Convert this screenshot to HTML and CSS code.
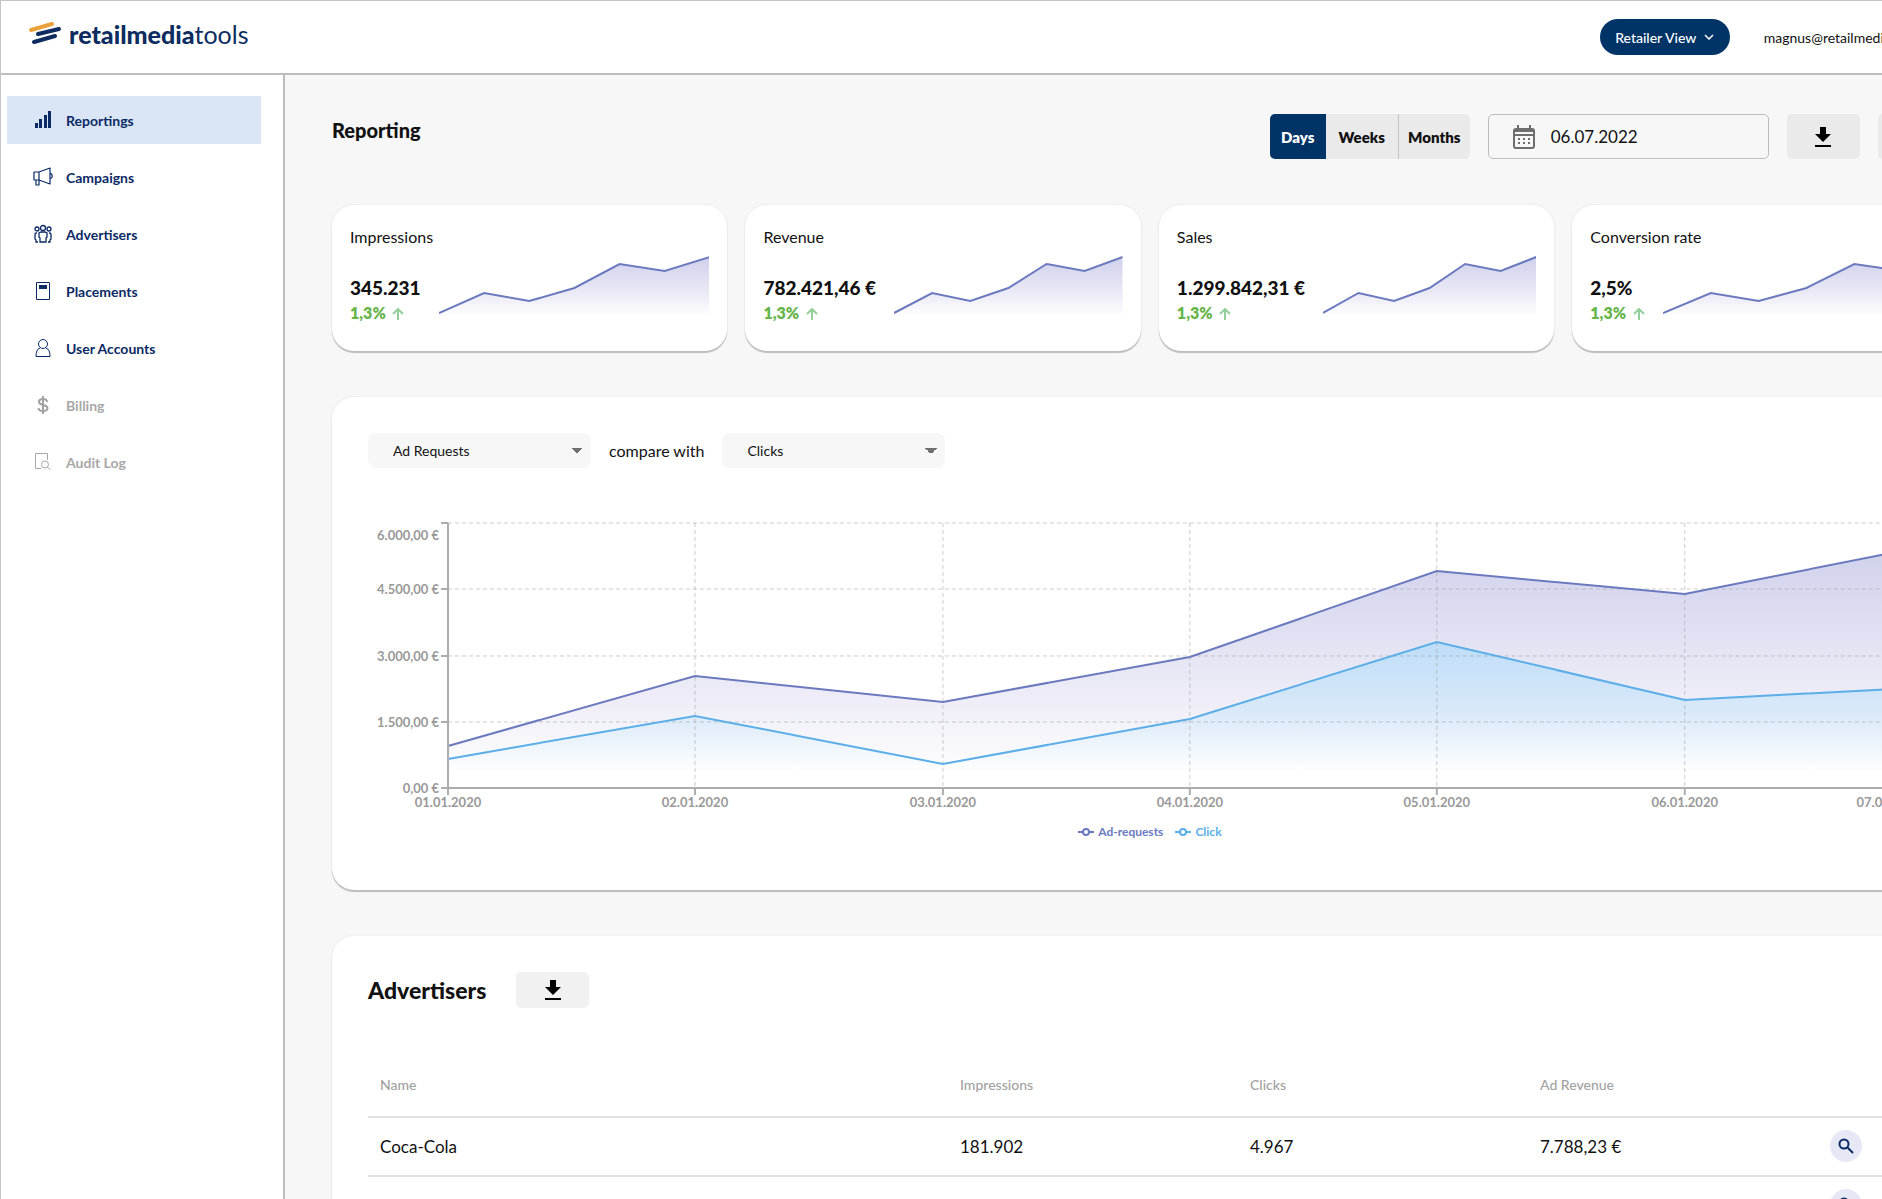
FILE: index.html
```html
<!DOCTYPE html>
<html lang="en">

<head>
    <meta charset="UTF-8">
    <meta name="viewport" content="width=device-width, initial-scale=1.0">
    <title>Reporting - retailmediatools</title>
    <link rel="stylesheet" href="styles.css">
</head>

<body>
    <!-- shared icons and sparkline -->
    <svg class="defs" width="0" height="0" aria-hidden="true">
        <defs>
            <linearGradient id="purple" x1="0" y1="0" x2="0" y2="1">
                <stop offset="0" stop-color="#cfd1ec"></stop>
                <stop offset="0.6" stop-color="#ecebf7"></stop>
                <stop offset="0.95" stop-color="#ffffff"></stop>
            </linearGradient>
            <linearGradient id="blue" x1="0" y1="0" x2="0" y2="1">
                <stop offset="0" stop-color="#b9dcf8"></stop>
                <stop offset="0.5" stop-color="#d9e9f9"></stop>
                <stop offset="0.9" stop-color="#ffffff"></stop>
            </linearGradient>
            <symbol id="spark" viewBox="0 0 270 70" preserveAspectRatio="none">
                <path d="M0 59 45 39 90 47 135 34 180 10 225 17 270 3V66H0z" fill="url(#purple)"></path>
                <path d="M0 59 45 39 90 47 135 34 180 10 225 17 270 3" fill="none" stroke="#6b79bf" stroke-width="2" vector-effect="non-scaling-stroke"></path>
            </symbol>
            <symbol id="download" viewBox="0 0 16 20">
                <path d="M5 0h6v7h5l-8 8-8-8h5zM0 18h16v2H0z"></path>
            </symbol>
            <symbol id="search" viewBox="0 0 16 16">
                <circle cx="6" cy="6" r="4.500" fill="none" stroke="#0b2a66" stroke-width="2"></circle>
                <path d="M9.500 9.500 15 15" stroke="#0b2a66" stroke-width="2"></path>
            </symbol>
            <symbol id="up" viewBox="0 0 12 12">
                <path d="M6 12V1M1 6l5-5 5 5" fill="none" stroke="#94cf9a" stroke-width="2"></path>
            </symbol>
        </defs>
    </svg>

    <div class="app">
        <header class="header">
            <a href="#" class="logo">
                <svg width="34" height="24" viewBox="0 0 34 24" fill="none" stroke-linecap="round" stroke-width="4">
                    <path d="M3 9 24 3" stroke="#e9a23b"></path>
                    <path d="M10 13 31 8" stroke="#0d2c5f"></path>
                    <path d="M6 21 27 15" stroke="#0d2c5f"></path>
                </svg>
                <span><b>retailmedia</b>tools</span>
            </a>
            <button class="view-btn">Retailer View
                <svg width="10" height="6" viewBox="0 0 10 6" fill="none" stroke="#fff" stroke-width="1.500"><path d="M1 1l4 4 4-4"></path></svg>
            </button>
            <span class="email">magnus@retailmediatools.com</span>
        </header>

        <div class="body">
            <nav class="sidebar">
                <a href="#" class="nav-item active">
                    <svg width="20" height="20" viewBox="0 0 20 20" fill="#0b2a66"><path d="M2 13h3v5H2zM6 9h3v9H6zM11 5h3v13h-3zM15 1h3v17h-3z"></path></svg>
                    Reportings
                </a>
                <a href="#" class="nav-item">
                    <svg width="20" height="20" viewBox="0 0 20 20" fill="none" stroke="#0b2a66" stroke-width="1.200" stroke-linejoin="round"><path d="M1 5h5v8H1zM6 5l11-4v16L6 13M3 13v5h3v-5M17 6c3 1 3 5 0 6"></path></svg>
                    Campaigns
                </a>
                <a href="#" class="nav-item">
                    <svg width="20" height="20" viewBox="0 0 20 20" fill="none" stroke="#0b2a66" stroke-width="1.300"><circle cx="10" cy="4" r="2.500"></circle><circle cx="4" cy="5" r="2"></circle><circle cx="16" cy="5" r="2"></circle><path d="M7 18v-4l-1-1V9l2-1h4l2 1v4l-1 1v4zM4 9H3l-1 1v5l1 1v2h2M16 9h1l1 1v5l-1 1v2h-2"></path></svg>
                    Advertisers
                </a>
                <a href="#" class="nav-item">
                    <svg width="20" height="20" viewBox="0 0 20 20"><path d="M3.500 1.500h13v17h-13z" fill="none" stroke="#0b2a66"></path><path d="M6 4h8v4H6z" fill="#0b2a66"></path></svg>
                    Placements
                </a>
                <a href="#" class="nav-item">
                    <svg width="20" height="20" viewBox="0 0 20 20" fill="none" stroke="#0b2a66"><circle cx="10" cy="6" r="4.500"></circle><path d="M7 10c-3 1-4 4-4 8.500h14c0-4.500-1-7.500-4-8.500"></path></svg>
                    User Accounts
                </a>
                <a href="#" class="nav-item disabled">
                    <svg width="20" height="20" viewBox="0 0 20 20" fill="none" stroke="#a2a2a2" stroke-width="2"><path d="M14 7c0-2-1.500-3-4-3S6 5 6 7c0 4 8.500 2 8.500 6 0 2-2 3-4.500 3s-4.500-1-4.500-3M10 1v18"></path></svg>
                    Billing
                </a>
                <a href="#" class="nav-item disabled">
                    <svg width="20" height="20" viewBox="0 0 20 20" fill="none" stroke="#a8a8a8"><path d="M8 16.500H2.500v-15h12V8"></path><circle cx="12" cy="12.500" r="3.500"></circle><path d="M14.500 15l3 3"></path></svg>
                    Audit Log
                </a>
            </nav>

            <main class="main">
                <div class="toolbar">
                    <h1>Reporting</h1>
                    <div class="toggle">
                        <button class="on">Days</button>
                        <button>Weeks</button>
                        <button>Months</button>
                    </div>
                    <label class="date">
                        <svg width="22" height="24" viewBox="0 0 22 24" fill="none" stroke="#6e6e6e" stroke-width="2"><rect x="1" y="4" width="20" height="19" rx="2"></rect><path d="M1 6h20M1 10h20M5 0v4M17 0v4"></path><path d="M5 14h12M5 18h12" stroke-dasharray="2 3"></path></svg>
                        <input type="text" value="06.07.2022" aria-label="Date">
                    </label>
                    <button class="download" aria-label="Download"><svg width="16" height="20"><use href="#download"></use></svg></button>
                    <button class="download last" aria-label="More"></button>
                </div>

                <section class="stats">
                    <div class="card stat">
                        <h3>Impressions</h3>
                        <div class="stat-row">
                            <div>
                                <p class="value">345.231</p>
                                <p class="change">1,3% <svg width="12" height="12"><use href="#up"></use></svg></p>
                            </div>
                            <svg class="spark"><use href="#spark"></use></svg>
                        </div>
                    </div>
                    <div class="card stat">
                        <h3>Revenue</h3>
                        <div class="stat-row">
                            <div>
                                <p class="value">782.421,46 €</p>
                                <p class="change">1,3% <svg width="12" height="12"><use href="#up"></use></svg></p>
                            </div>
                            <svg class="spark"><use href="#spark"></use></svg>
                        </div>
                    </div>
                    <div class="card stat">
                        <h3>Sales</h3>
                        <div class="stat-row">
                            <div>
                                <p class="value">1.299.842,31 €</p>
                                <p class="change">1,3% <svg width="12" height="12"><use href="#up"></use></svg></p>
                            </div>
                            <svg class="spark"><use href="#spark"></use></svg>
                        </div>
                    </div>
                    <div class="card stat">
                        <h3>Conversion rate</h3>
                        <div class="stat-row">
                            <div>
                                <p class="value">2,5%</p>
                                <p class="change">1,3% <svg width="12" height="12"><use href="#up"></use></svg></p>
                            </div>
                            <svg class="spark"><use href="#spark"></use></svg>
                        </div>
                    </div>
                </section>

                <section class="card panel">
                    <div class="compare">
                        <select aria-label="First metric">
                            <option>Ad Requests</option>
                        </select>
                        <span>compare with</span>
                        <select aria-label="Second metric">
                            <option>Clicks</option>
                        </select>
                    </div>
                    <svg class="chart" viewBox="0 0 1564 300">
                        <path d="M80 231 327 161 575 187 822 142 1069 56 1317 79 1564 30V273H80z" fill="url(#purple)"></path>
                        <path d="M80 244 327 201 575 249 822 204 1069 127 1317 185 1564 172V273H80z" fill="url(#blue)" fill-opacity="0.900"></path>
                        <g class="grid">
                            <path d="M80 8H1564M80 74H1564M80 141H1564M80 207H1564"></path>
                            <path d="M327 8V273M575 8V273M822 8V273M1069 8V273M1317 8V273M1564 8V273"></path>
                        </g>
                        <path d="M80 231 327 161 575 187 822 142 1069 56 1317 79 1564 30" fill="none" stroke="#6b79bf" stroke-width="2"></path>
                        <path d="M80 244 327 201 575 249 822 204 1069 127 1317 185 1564 172" fill="none" stroke="#5baee8" stroke-width="2"></path>
                        <g class="axis">
                            <path d="M80 8V273M80 273H1564"></path>
                            <path d="M73 8h7M73 74h7M73 141h7M73 207h7M73 273h7M80 273v7M327 273v7M575 273v7M822 273v7M1069 273v7M1317 273v7M1564 273v7"></path>
                        </g>
                        <g class="labels" text-anchor="end">
                            <text x="71" y="25">6.000,00 €</text>
                            <text x="71" y="79">4.500,00 €</text>
                            <text x="71" y="146">3.000,00 €</text>
                            <text x="71" y="212">1.500,00 €</text>
                            <text x="71" y="278">0,00 €</text>
                        </g>
                        <g class="labels" text-anchor="middle">
                            <text x="80" y="292">01.01.2020</text>
                            <text x="327" y="292">02.01.2020</text>
                            <text x="575" y="292">03.01.2020</text>
                            <text x="822" y="292">04.01.2020</text>
                            <text x="1069" y="292">05.01.2020</text>
                            <text x="1317" y="292">06.01.2020</text>
                            <text x="1522" y="292">07.01.2020</text>
                        </g>
                    </svg>
                    <div class="legend">
                        <span class="requests"><svg width="16" height="8" viewBox="0 0 16 8" fill="none" stroke="#6b79bf" stroke-width="2"><path d="M0 4h5M11 4h5"></path><circle cx="8" cy="4" r="3"></circle></svg>Ad-requests</span>
                        <span class="clicks"><svg width="16" height="8" viewBox="0 0 16 8" fill="none" stroke="#5baee8" stroke-width="2"><path d="M0 4h5M11 4h5"></path><circle cx="8" cy="4" r="3"></circle></svg>Click</span>
                    </div>
                </section>

                <section class="card panel">
                    <div class="panel-head">
                        <h2>Advertisers</h2>
                        <button class="download small" aria-label="Download advertisers"><svg width="16" height="20"><use href="#download"></use></svg></button>
                    </div>
                    <table>
                        <thead>
                            <tr>
                                <th class="name">Name</th>
                                <th class="number">Impressions</th>
                                <th class="number">Clicks</th>
                                <th class="number">Ad Revenue</th>
                                <th></th>
                            </tr>
                        </thead>
                        <tbody>
                            <tr>
                                <td>Coca-Cola</td>
                                <td>181.902</td>
                                <td>4.967</td>
                                <td>7.788,23 €</td>
                                <td><button class="search" aria-label="Show Coca-Cola"><svg width="16" height="16"><use href="#search"></use></svg></button></td>
                            </tr>
                            <tr>
                                <td>Dr. Oetker</td>
                                <td>175.113</td>
                                <td>3.782</td>
                                <td>6.713,43 €</td>
                                <td><button class="search" aria-label="Show Dr. Oetker"><svg width="16" height="16"><use href="#search"></use></svg></button></td>
                            </tr>
                        </tbody>
                    </table>
                </section>
            </main>
        </div>
    </div>
</body>

</html>
```
FILE: styles.css
```css
* {
    box-sizing: border-box;
}

body {
    margin: 0;
    overflow: hidden;
    font-family: Lato, "Liberation Sans", sans-serif;
    font-size: 16px;
    color: #111;
    background-color: #fff;
}

h1,
h2,
h3,
p {
    margin: 0;
}

button,
input,
select {
    font-family: inherit;
    color: inherit;
    border: none;
    outline: none;
}

button {
    cursor: pointer;
}

.defs {
    position: absolute;
}

/* the dashboard is a bit wider than the window */
.app {
    display: flex;
    flex-direction: column;
    width: 107vw;
    height: 100vh;
    border-top: 1px solid #c4c4c4;
    border-left: 1px solid #c4c4c4;
}

.header {
    display: flex;
    align-items: center;
    flex-shrink: 0;
    height: 74px;
    padding-left: 27px;
    border-bottom: 2px solid #bdbdbd;
}

.logo {
    display: flex;
    gap: 7px;
    margin-right: auto;
    padding-bottom: 6px;
    font-size: 25px;
    line-height: 26px;
    color: #0d2c5f;
    text-decoration: none;
}

.logo b {
    font-weight: 900;
}

.view-btn {
    display: flex;
    align-items: center;
    justify-content: center;
    gap: 8px;
    width: 130px;
    height: 36px;
    margin-right: 34px;
    border-radius: 18px;
    font-size: 14px;
    font-weight: 500;
    color: #fff;
    background-color: #003366;
}

.email {
    width: 250px;
    font-size: 14px;
}

.body {
    display: flex;
    flex: 1;
    min-height: 0;
}

.sidebar {
    display: flex;
    flex-direction: column;
    gap: 9px;
    flex-shrink: 0;
    width: 284px;
    padding: 21px 22px 0 6px;
    border-right: 2px solid #bdbdbd;
}

.nav-item {
    display: flex;
    align-items: center;
    gap: 13px;
    height: 48px;
    padding-left: 26px;
    font-size: 14px;
    font-weight: 700;
    color: #0b2a66;
    text-decoration: none;
}

.nav-item.active {
    background-color: #dae6f6;
}

.nav-item.disabled {
    color: #a8a8a8;
}

.main {
    flex: 1;
    min-width: 0;
    padding: 39px 46px 0 47px;
    overflow-y: auto;
    scrollbar-width: none;
    background-color: #f7f7f7;
}

.toolbar {
    display: flex;
    align-items: center;
    gap: 18px;
    height: 45px;
    margin-bottom: 46px;
}

h1 {
    align-self: flex-start;
    margin-right: auto;
    font-size: 20px;
    line-height: 32px;
    font-weight: 900;
}

.toggle {
    display: flex;
    height: 45px;
    border-radius: 5px;
    overflow: hidden;
}

.toggle button {
    width: 72px;
    padding: 0;
    font-size: 15px;
    font-weight: 800;
    background-color: #eaeaea;
}

.toggle button.on {
    width: 56px;
    color: #fff;
    background-color: #003366;
}

.toggle button + button + button {
    border-left: 1px solid #c4c4c4;
}

.date {
    display: flex;
    align-items: center;
    gap: 16px;
    width: 281px;
    height: 45px;
    padding: 0 24px;
    border: 1px solid #bdbdbd;
    border-radius: 5px;
}

.date input {
    flex: 1;
    min-width: 0;
    padding: 0;
    font-size: 17px;
    background: none;
}

.download {
    display: flex;
    align-items: center;
    justify-content: center;
    width: 73px;
    height: 45px;
    border-radius: 5px;
    background-color: #eaeaea;
}

.download.last {
    width: 90px;
}

.download.small {
    height: 36px;
    background-color: #f1f1f1;
}

.card {
    border-radius: 22px;
    background-color: #fff;
    box-shadow: 0 2px 1px #bdbdbd, 0 0 3px #e4e4e4;
}

.stats {
    display: grid;
    grid-template-columns: repeat(4, minmax(0, 1fr));
    gap: 18px;
    margin-bottom: 46px;
}

.stat {
    height: 146px;
    padding: 20px 18px;
}

.stat h3 {
    font-size: 16px;
    line-height: 24px;
    font-weight: 400;
}

.stat-row {
    display: flex;
    gap: 18px;
}

.value {
    padding-top: 26px;
    font-size: 19px;
    line-height: 26px;
    font-weight: 900;
    white-space: nowrap;
}

.change {
    font-size: 16px;
    line-height: 24px;
    font-weight: 800;
    color: #67b54b;
}

.change svg {
    margin-left: 3px;
    vertical-align: -1px;
}

.spark {
    flex: 1;
    min-width: 0;
    width: 0;
    height: 70px;
    margin-top: 5px;
}

.panel {
    margin-bottom: 46px;
    padding: 36px;
}

.compare {
    display: flex;
    align-items: center;
    gap: 18px;
    margin-bottom: 47px;
    font-size: 16px;
}

.compare select {
    appearance: none;
    width: 223px;
    height: 35px;
    padding: 0 25px;
    border-radius: 8px;
    font-size: 14px;
    background-color: #f7f7f7;
    background-image: linear-gradient(to bottom right, #6e6e6e 50%, transparent 50%), linear-gradient(to bottom left, #6e6e6e 50%, transparent 50%);
    background-repeat: no-repeat;
    background-position: right 8px center, right 14px center;
    background-size: 6px 6px;
}

.chart {
    display: block;
    width: 100%;
}

.grid {
    fill: none;
    stroke: #999;
    stroke-opacity: 0.5;
    stroke-dasharray: 4 3;
}

.axis {
    fill: none;
    stroke: #adadad;
    stroke-width: 2;
}

.labels {
    font-size: 13px;
    font-weight: 700;
    fill: #999;
}

.legend {
    display: flex;
    justify-content: center;
    gap: 12px;
    padding: 3px 0 8px;
    font-size: 12px;
    line-height: 28px;
    font-weight: 700;
}

.legend svg {
    margin-right: 4px;
}

.requests {
    color: #6b79bf;
}

.clicks {
    color: #5baee8;
}

.panel-head {
    display: flex;
    align-items: center;
    gap: 30px;
    margin-bottom: 46px;
}

h2 {
    font-size: 23px;
    line-height: 36px;
    font-weight: 900;
}

table {
    width: 100%;
    table-layout: fixed;
    border-collapse: collapse;
}

th,
td {
    height: 59px;
    padding: 0 12px;
    text-align: left;
    border-bottom: 2px solid #e2e2e2;
}

th {
    height: 63px;
    font-size: 14px;
    font-weight: 500;
    color: #a2a2a2;
}

td {
    font-size: 17px;
}

.name {
    width: 580px;
}

.number {
    width: 290px;
}

.search {
    display: flex;
    align-items: center;
    justify-content: center;
    width: 32px;
    height: 32px;
    padding: 0;
    border-radius: 50%;
    background-color: #e6e8f5;
}
```
